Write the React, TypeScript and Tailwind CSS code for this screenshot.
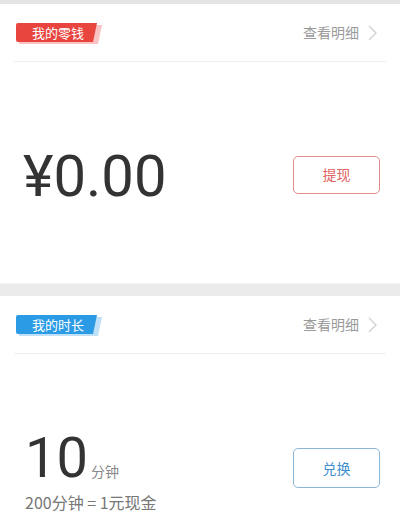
const CJK = "'Noto Sans CJK SC', 'Noto Sans', sans-serif";

function Tag({ label, color, shadow }: { label: string; color: string; shadow: string }) {
  return (
    <div className="relative w-[88px] h-[21px] ml-[2px] mt-[2px]">
      <svg className="absolute inset-0" width="88" height="21" viewBox="0 0 88 21">
        <path d="M3 2 L86 2 L82 21 L3 21 Z" fill={shadow} />
        <path d="M0 2 Q0 0 2 0 L81 0 L77 19 L2 19 Q0 19 0 17 Z" fill={color} />
      </svg>
      <span className="relative block pl-[16px] text-[13px] leading-[19px] text-white">{label}</span>
    </div>
  );
}

function Header({ label, color, shadow }: { label: string; color: string; shadow: string }) {
  return (
    <div className="flex h-[58px] items-center justify-between border-b border-[#efefef]">
      <Tag label={label} color={color} shadow={shadow} />
      <div className="flex items-center gap-[9px] pr-[9px] text-[14px] text-[#9a9a9a]">
        <span>查看明细</span>
        <svg width="9" height="16" viewBox="0 0 9 16" fill="none">
          <path d="M1 1 L8 8 L1 15" stroke="#cfcfcf" strokeWidth="1.3" />
        </svg>
      </div>
    </div>
  );
}

export default function App() {
  return (
    <div className="w-[400px] h-[516px] overflow-hidden bg-white" style={{ fontFamily: CJK }}>
      <div className="h-[4px] bg-[#e4e4e4]" />

      {/* 零钱 */}
      <section className="px-[14px]">
        <Header label="我的零钱" color="#e8453f" shadow="#f7c3c3" />
        <div className="flex h-[221px] items-center justify-between pl-[9px] pr-[6px]">
          <div className="mt-[6px] text-[58px] leading-none text-[#333]" style={{ fontFamily: 'Roboto, sans-serif' }}>
            ¥0.00
          </div>
          <button className="mt-[4px] flex h-[38px] w-[87px] items-center justify-center rounded-[5px] border border-[#e58c8c] text-[14px] text-[#e06464]">
            提现
          </button>
        </div>
      </section>

      <div className="h-[13px] border-t border-[#f5f5f5] bg-[#ebebeb]" />

      {/* 时长 */}
      <section className="px-[14px]">
        <Header label="我的时长" color="#2b9be6" shadow="#bfe0f6" />
        <div className="flex justify-between pl-[11px] pr-[6px] pt-[76px]">
          <div>
            <div className="flex items-baseline">
              <span className="text-[56px] leading-none text-[#333]" style={{ fontFamily: 'Roboto, sans-serif' }}>10</span>
              <span className="ml-[3px] text-[14px] text-[#888]">分钟</span>
            </div>
            <div className="mt-[8px] text-[16px] leading-none text-[#777]">200分钟 = 1元现金</div>
          </div>
          <button className="mt-[18px] flex h-[40px] w-[87px] items-center justify-center rounded-[5px] border border-[#8ab6d6] text-[14px] text-[#3f8fd0]">
            兑换
          </button>
        </div>
      </section>
    </div>
  );
}
